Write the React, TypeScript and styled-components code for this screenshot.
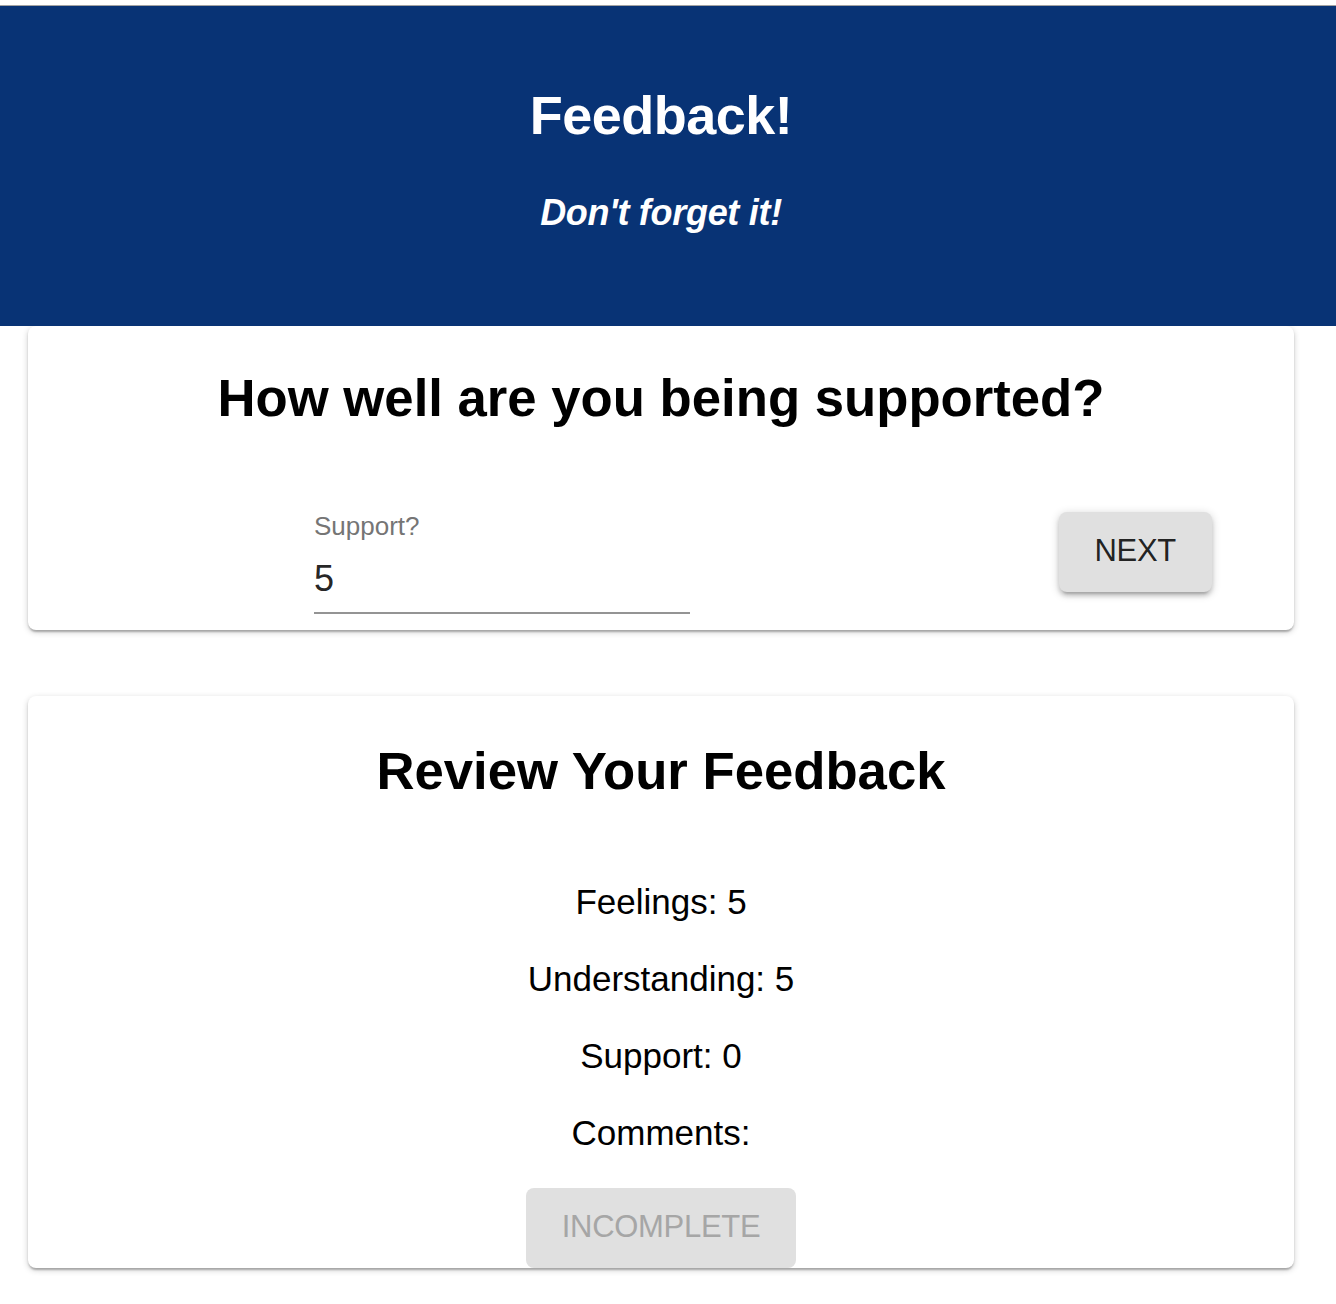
import React from "react";
import styled, { createGlobalStyle } from "styled-components";

const GlobalStyle = createGlobalStyle`
  html, body {
    margin: 0;
    padding: 0;
    background: #ffffff;
  }
  body {
    padding-top: 5px;
    font-family: "Liberation Sans", Arial, Helvetica, sans-serif;
    color: #000;
  }
`;

const Page = styled.div`
  display: flex;
  flex-direction: column;
  min-height: 1299px;
`;

const Header = styled.header`
  position: relative;
  z-index: 1;
  border-top: 1px solid #a3a3a3;
  background: #083375;
  height: 321px;
  box-sizing: border-box;
  padding: 79px 14px 0 0;
  display: flex;
  flex-direction: column;
  align-items: center;
  color: #ffffff;
`;

const Title = styled.h1`
  margin: 0;
  font-size: 54px;
  line-height: 60px;
  font-weight: 700;
  letter-spacing: -0.5px;
`;

const Subtitle = styled.h2`
  margin: 47px 0 0;
  font-size: 36px;
  line-height: 42px;
  font-weight: 700;
  font-style: italic;
  letter-spacing: -0.3px;
`;

const Card = styled.section<{ $top: number; $bottom: number; $gap?: number }>`
  margin: ${(p) => p.$gap ?? 0}px 42px 0 28px;
  background: #ffffff;
  border-radius: 8px;
  box-shadow: 0 2px 6px rgba(0, 0, 0, 0.2), 0 2px 2px rgba(0, 0, 0, 0.14),
    0 4px 2px -2px rgba(0, 0, 0, 0.12);
  padding: ${(p) => p.$top}px 0 ${(p) => p.$bottom}px;
  display: flex;
  flex-direction: column;
  align-items: center;
`;

const CardTitle = styled.h2<{ $after: number }>`
  margin: 0 0 ${(p) => p.$after}px;
  font-size: 52.7px;
  line-height: 60px;
  font-weight: 700;
  text-align: center;
`;

const FieldRow = styled.div`
  align-self: stretch;
  display: flex;
  justify-content: space-between;
  align-items: flex-start;
  padding: 0 82px 0 286px;
`;

const Field = styled.label`
  display: flex;
  flex-direction: column;
  width: 376px;
  padding-top: 2px;
`;

const FieldLabel = styled.span`
  font-size: 26px;
  line-height: 30px;
  color: #757575;
`;

const FieldInput = styled.input`
  margin-top: 17px;
  padding: 0 0 12px;
  border: none;
  border-bottom: 2px solid #949494;
  outline: none;
  background: transparent;
  font-family: inherit;
  font-size: 36px;
  line-height: 42px;
  height: 56px;
  box-sizing: border-box;
  color: rgba(0, 0, 0, 0.87);
`;

const Button = styled.button<{ $disabled?: boolean; $offset?: number }>`
  margin-top: ${(p) => p.$offset ?? 0}px;
  height: 80px;
  padding: 0 36px 2px;
  border: none;
  border-radius: 8px;
  background: #e0e0e0;
  font-family: inherit;
  font-size: 31px;
  letter-spacing: -0.3px;
  text-transform: uppercase;
  color: ${(p) => (p.$disabled ? "#a6a6a6" : "rgba(0, 0, 0, 0.87)")};
  box-shadow: ${(p) =>
    p.$disabled
      ? "none"
      : "0 2px 10px rgba(0,0,0,0.2), 0 4px 4px rgba(0,0,0,0.14), 0 6px 2px -4px rgba(0,0,0,0.12)"};
  cursor: ${(p) => (p.$disabled ? "default" : "pointer")};
  display: flex;
  align-items: center;
  justify-content: center;
`;

const ReviewList = styled.div`
  display: flex;
  flex-direction: column;
  align-items: center;
  gap: 35px;
  margin-bottom: 34px;
`;

const ReviewItem = styled.p`
  margin: 0;
  font-size: 35px;
  line-height: 42px;
  text-align: center;
`;

export default function App() {
  const review = [
    { label: "Feelings", value: "5" },
    { label: "Understanding", value: "5" },
    { label: "Support", value: "0" },
    { label: "Comments", value: "" },
  ];
  return (
    <Page>
      <GlobalStyle />
      <Header>
        <Title>Feedback!</Title>
        <Subtitle>Don't forget it!</Subtitle>
      </Header>
      <Card $top={42} $bottom={16}>
        <CardTitle $after={81}>How well are you being supported?</CardTitle>
        <FieldRow>
          <Field>
            <FieldLabel>Support?</FieldLabel>
            <FieldInput type="text" defaultValue="5" />
          </Field>
          <Button $offset={3}>Next</Button>
        </FieldRow>
      </Card>
      <Card $top={45} $bottom={0} $gap={66}>
        <CardTitle $after={80}>Review Your Feedback</CardTitle>
        <ReviewList>
          {review.map((r) => (
            <ReviewItem key={r.label}>
              {r.label}: {r.value}
            </ReviewItem>
          ))}
        </ReviewList>
        <Button $disabled disabled>
          Incomplete
        </Button>
      </Card>
    </Page>
  );
}
